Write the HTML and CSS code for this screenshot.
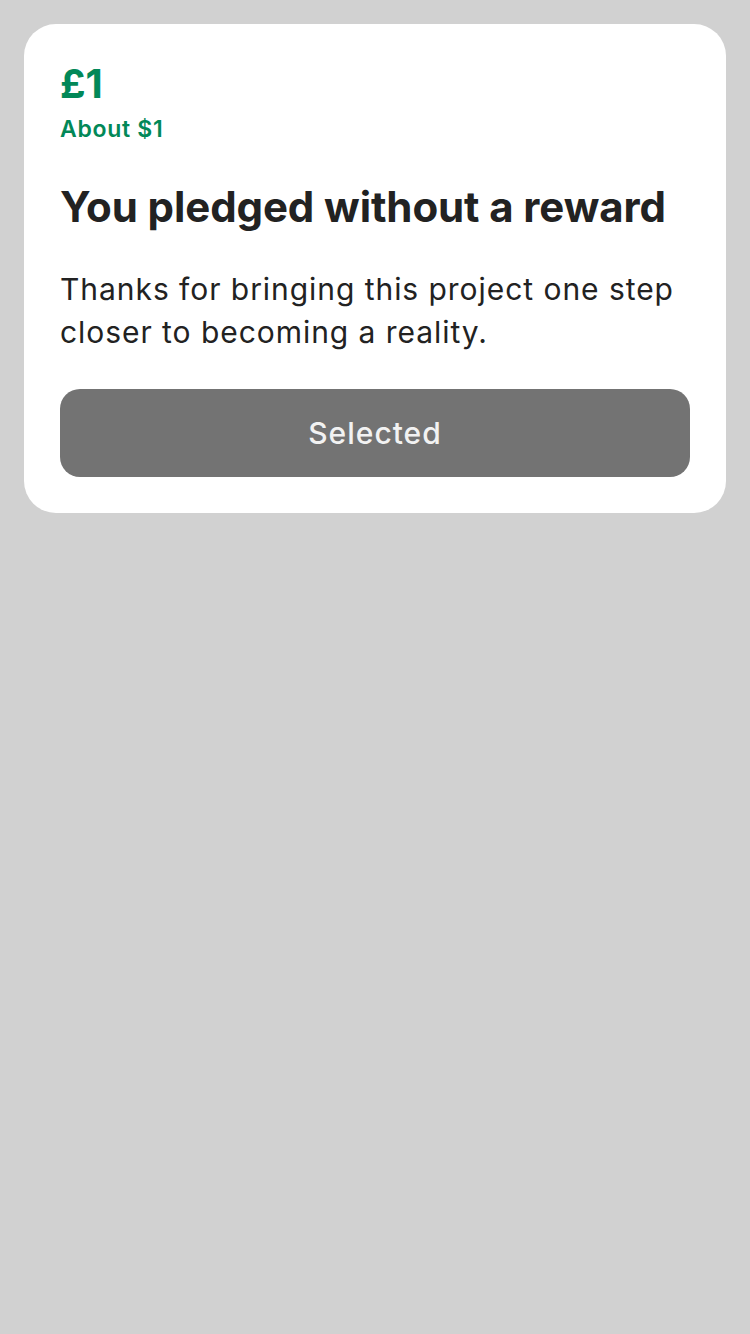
FILE: index.html
```html
<!DOCTYPE html>
<html>
<head>
<meta charset="utf-8">
<link rel="stylesheet" href="styles.css">
</head>
<body>
<div class="card">
  <div class="price">£1</div>
  <div class="about">About $1</div>
  <h1 class="title">You pledged without a reward</h1>
  <p class="desc">Thanks for bringing this project one step closer to becoming a reality.</p>
  <div class="button">Selected</div>
</div>
</body>
</html>
```
FILE: styles.css
```css
html, body {
  margin: 0;
  padding: 0;
  background: #d1d1d1;
  height: 100%;
}
body {
  padding: 24px;
  box-sizing: border-box;
  font-family: Inter, "Liberation Sans", sans-serif;
}
.card {
  background: #ffffff;
  border-radius: 32px;
  padding: 36px 36px 36px 36px;
}
.price {
  color: #028858;
  font-size: 40px;
  font-weight: 700;
  line-height: 48px;
}
.about {
  color: #028858;
  font-size: 23px;
  font-weight: 600;
  line-height: 28px;
  letter-spacing: 0.7px;
  margin-top: 7px;
}
.title {
  margin: 40px 0 0 0;
  color: #222222;
  font-size: 42px;
  font-weight: 700;
  line-height: 48px;
  letter-spacing: -0.1px;
}
.desc {
  margin: 37px 0 0 0;
  color: #222222;
  font-size: 30px;
  font-weight: 400;
  line-height: 43px;
  letter-spacing: 0.95px;
}
.button {
  margin-top: 35px;
  height: 88px;
  border-radius: 20px;
  background: #737373;
  color: #f2f2f2;
  font-size: 30px;
  font-weight: 500;
  letter-spacing: 1px;
  display: flex;
  align-items: center;
  justify-content: center;
}
```
